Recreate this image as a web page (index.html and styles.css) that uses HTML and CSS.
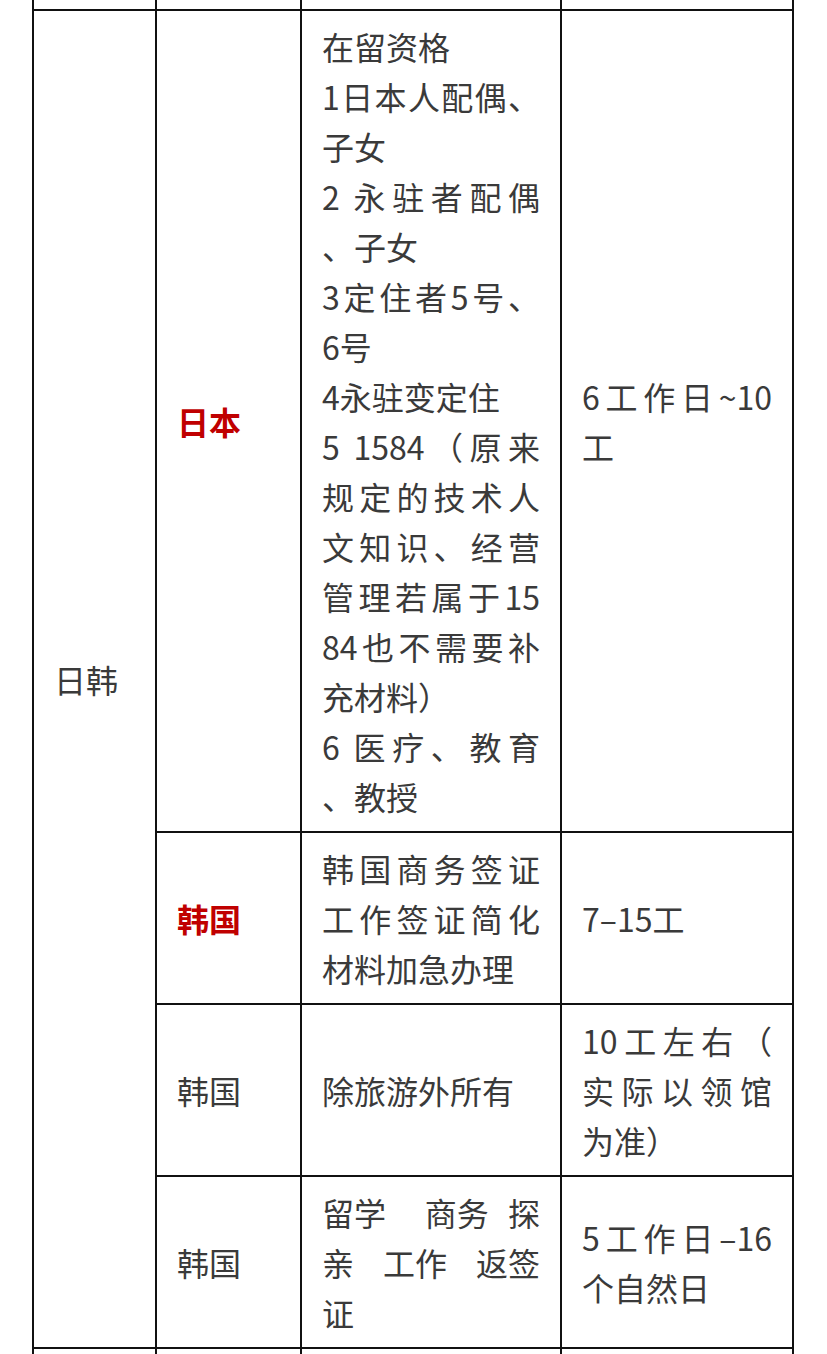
FILE: index.html
```html
<!DOCTYPE html>
<html lang="zh-CN">
<head>
<meta charset="utf-8">
<title>日韩签证</title>
<link rel="stylesheet" href="styles.css">
</head>
<body>
<table class="visa">
  <tr class="stub stub-top">
    <td class="c1"><div class="stub-fill"></div></td>
    <td class="c2"></td>
    <td class="c3"></td>
    <td class="c4"></td>
  </tr>
  <tr>
    <td rowspan="4" class="region">日韩</td>
    <td class="country hl">日本</td>
    <td class="types">
      <span class="ln">在留资格</span>
      <span class="ln j">1日本人配偶、</span>
      <span class="ln">子女</span>
      <span class="ln j">2 永驻者配偶</span>
      <span class="ln">、子女</span>
      <span class="ln j">3定住者5号、</span>
      <span class="ln">6号</span>
      <span class="ln">4永驻变定住</span>
      <span class="ln j">5 1584（原来</span>
      <span class="ln j">规定的技术人</span>
      <span class="ln j">文知识、经营</span>
      <span class="ln j">管理若属于15</span>
      <span class="ln j">84也不需要补</span>
      <span class="ln">充材料）</span>
      <span class="ln j">6 医疗、教育</span>
      <span class="ln">、教授</span>
    </td>
    <td class="time">
      <span class="ln j">6工作日~10</span>
      <span class="ln">工</span>
    </td>
  </tr>
  <tr>
    <td class="country hl">韩国</td>
    <td class="types">
      <span class="ln j">韩国商务签证</span>
      <span class="ln j">工作签证简化</span>
      <span class="ln">材料加急办理</span>
    </td>
    <td class="time">
      <span class="ln">7–15工</span>
    </td>
  </tr>
  <tr>
    <td class="country">韩国</td>
    <td class="types">
      <span class="ln">除旅游外所有</span>
    </td>
    <td class="time">
      <span class="ln j">10工左右（</span>
      <span class="ln j">实际以领馆</span>
      <span class="ln">为准）</span>
    </td>
  </tr>
  <tr>
    <td class="country">韩国</td>
    <td class="types">
      <span class="ln words"><span>留学</span><span class="wgap"></span><span>商务</span><span>探</span></span>
      <span class="ln words"><span>亲</span><span>工作</span><span>返签</span></span>
      <span class="ln">证</span>
    </td>
    <td class="time">
      <span class="ln j">5工作日–16</span>
      <span class="ln">个自然日</span>
    </td>
  </tr>
  <tr class="stub">
    <td></td>
    <td></td>
    <td></td>
    <td></td>
  </tr>
</table>
</body>
</html>
```

FILE: styles.css
```css
html, body {
  margin: 0;
  padding: 0;
  background: #ffffff;
}

body {
  font-family: "Noto Sans CJK SC", "Noto Sans", sans-serif;
  color: #3a3a3a;
  overflow: hidden;
}

.visa {
  margin-left: 32px;
  width: 762px;
  table-layout: fixed;
  border-collapse: separate;
  border-spacing: 0;
  border: 1px solid #111;
  border-top: 0;
  font-size: 32px;
  line-height: 50px;
}

.visa td {
  border: 1px solid #111;
  padding: 10px 20px;
  vertical-align: middle;
  text-align: left;
}

.visa .stub td {
  padding: 0;
  height: 40px;
}

.visa .stub-top td {
  border-top: 0;
  height: auto;
}

.stub-fill {
  height: 9px;
}

.c1 { width: 121px; }
.c2 { width: 143px; }
.c3 { width: 258px; }
.c4 { width: 230px; }

.ln {
  display: block;
  white-space: nowrap;
}

.ln.j {
  text-align: justify;
  text-align-last: justify;
  white-space: normal;
}

.ln.words {
  display: flex;
  justify-content: space-between;
}

.hl {
  color: #c00000;
  font-weight: 700;
}
```
